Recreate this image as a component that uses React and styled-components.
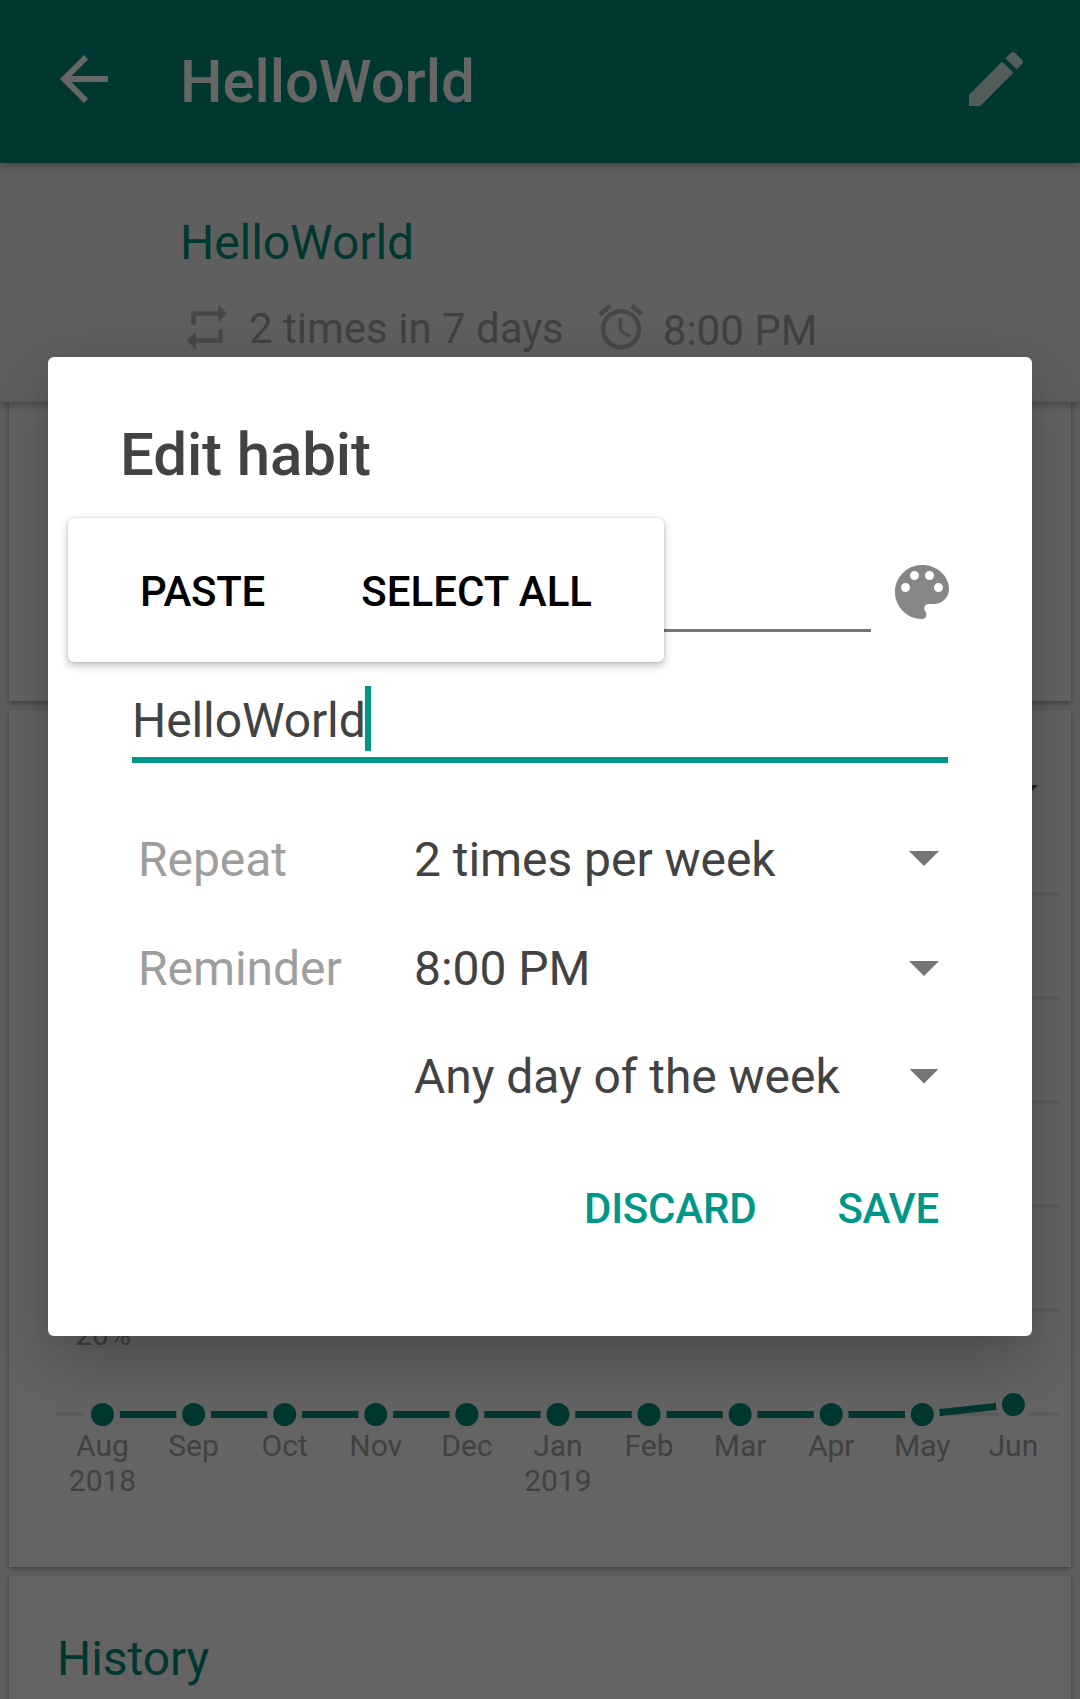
import React from "react";
import styled, { createGlobalStyle } from "styled-components";

const TEAL_DARK = "#00897b";
const TEAL = "#009688";

const GlobalStyle = createGlobalStyle`
  * { box-sizing: border-box; }
  body { margin: 0; font-family: Roboto, "Noto Sans", sans-serif; }
  button { font: inherit; border: 0; background: none; padding: 0; margin: 0; }
  svg { display: block; flex: none; }
`;

const Screen = styled.div`
  position: relative;
  width: 1080px;
  height: 1699px;
  overflow: hidden;
  display: flex;
  flex-direction: column;
  background: #eeeeee;
`;

const Toolbar = styled.header`
  position: relative;
  z-index: 2;
  flex: none;
  height: 163px;
  display: flex;
  align-items: center;
  padding: 0 48px 5px;
  background: ${TEAL_DARK};
  color: #fff;
  box-shadow: 0 3px 8px rgba(0, 0, 0, 0.3);
`;

const ToolbarTitle = styled.h1`
  flex: 1;
  margin: 5px 0 0 60px;
  font-size: 60px;
  line-height: 70px;
  font-weight: 500;
  letter-spacing: -0.1px;
`;

const Icon = styled.svg.attrs({ viewBox: "0 0 24 24" })`
  width: ${(p) => p.$size}px;
  height: ${(p) => p.$size}px;
  fill: ${(p) => p.$color || "currentColor"};
  opacity: ${(p) => p.$opacity || 1};
`;

const Summary = styled.section`
  position: relative;
  z-index: 1;
  flex: none;
  height: 239px;
  padding: 52px 0 0 180px;
  background: #eeeeee;
  box-shadow: 0 3px 8px rgba(0, 0, 0, 0.3);
`;

const SectionTitle = styled.h2`
  margin: 0;
  font-size: 48px;
  line-height: 56px;
  font-weight: 400;
  letter-spacing: -0.06px;
  color: ${TEAL_DARK};
`;

const Facts = styled.div`
  display: flex;
  align-items: flex-start;
  margin-top: 29px;
  color: #a3a3a3;
`;

const Fact = styled.span`
  margin: ${(p) => p.$top}px ${(p) => p.$after || 0}px 0 ${(p) => p.$before}px;
  font-size: 42px;
  line-height: 50px;
  white-space: nowrap;
`;

const CardList = styled.main`
  display: flex;
  flex-direction: column;
  gap: 9px;
  padding: 0 9px;
`;

const Card = styled.section`
  flex: none;
  height: ${(p) => p.$height}px;
  background: #fafafa;
  box-shadow: 0 2px 5px rgba(0, 0, 0, 0.35);
`;

const ScoreCard = styled(Card)`
  display: flex;
  flex-direction: column;
  gap: 14px;
  padding-top: 75px;
`;

const Interval = styled.div`
  display: flex;
  justify-content: flex-end;
  padding-right: 33px;
  height: 15px;
`;

const HistoryCard = styled(Card)`
  padding: 55px 48px 0;
`;

const Triangle = styled.i`
  width: 30px;
  height: 15px;
  margin-bottom: ${(p) => p.$lift || 0}px;
  background: ${(p) => p.$color};
  clip-path: polygon(0 0, 100% 0, 50% 100%);
`;

const Scrim = styled.div`
  position: absolute;
  inset: 0;
  z-index: 3;
  padding: 357px 48px 0;
  background: rgba(0, 0, 0, 0.6);
`;

const Dialog = styled.form`
  position: relative;
  height: 979px;
  padding-top: 63px;
  border-radius: 6px;
  background: #fff;
  color: #424242;
  box-shadow: 0 26px 64px rgba(0, 0, 0, 0.24), 0 0 20px rgba(0, 0, 0, 0.04);
`;

const DialogTitle = styled.h2`
  margin: 0 72px;
  font-size: 60px;
  line-height: 70px;
  font-weight: 500;
  letter-spacing: -0.12px;
`;

const NameRow = styled.div`
  display: flex;
  align-items: center;
  gap: 15px;
  height: 80px;
  margin: 62px 0 0 84px;
  color: #868686;
`;

const NameField = styled.div`
  width: 739px;
  height: 80px;
  border-bottom: 3px solid #757575;
`;

const QuestionField = styled.div`
  display: flex;
  align-items: flex-start;
  height: 77px;
  margin: 54px 84px 0;
  border-bottom: 6px solid ${TEAL};
  font-size: 48px;
  line-height: 69px;
  letter-spacing: -0.1px;
`;

const TextCursor = styled.i`
  width: 6px;
  height: 65px;
  margin-left: -1px;
  background: ${TEAL};
`;

const Options = styled.div`
  display: flex;
  flex-direction: column;
  margin-top: 42px;
`;

const OptionRow = styled.div`
  display: grid;
  grid-template-columns: 276px 1fr 30px;
  align-items: center;
  height: ${(p) => p.$height}px;
  padding: 0 93px 0 90px;
  font-size: 48px;
  line-height: 56px;
  letter-spacing: -0.05px;
`;

const OptionLabel = styled.span`
  color: #9e9e9e;
`;

const Actions = styled.div`
  display: flex;
  justify-content: flex-end;
  gap: 81px;
  margin-top: 53px;
  padding-right: 93px;
`;

const ActionButton = styled.button`
  && {
    font-size: 42px;
    line-height: 50px;
    font-weight: 500;
    letter-spacing: -0.2px;
    color: ${TEAL};
  }
`;

const ContextMenu = styled.div`
  position: absolute;
  left: 20px;
  top: 161px;
  width: 596px;
  height: 144px;
  display: flex;
  align-items: center;
  justify-content: space-between;
  padding: 4px 72px 0;
  border-radius: 6px;
  background: #fff;
  box-shadow: 0 4px 8px rgba(0, 0, 0, 0.24), 0 0 3px rgba(0, 0, 0, 0.16);
`;

const ContextItem = styled.button`
  && {
    font-size: 42px;
    line-height: 50px;
    font-weight: 500;
    letter-spacing: ${(p) => p.$tracking || 0}px;
    color: #000;
  }
`;

const ChartText = styled.text`
  font-size: 30px;
  fill: #a3a3a3;
  text-anchor: middle;
`;

const months = [
  { label: "Aug", year: "2018", score: 0 },
  { label: "Sep", score: 0 },
  { label: "Oct", score: 0 },
  { label: "Nov", score: 0 },
  { label: "Dec", score: 0 },
  { label: "Jan", year: "2019", score: 0 },
  { label: "Feb", score: 0 },
  { label: "Mar", score: 0 },
  { label: "Apr", score: 0 },
  { label: "May", score: 0 },
  { label: "Jun", score: 1.92 },
];

const CHART_TOP = 80;
const CHART_STEP = 104;
const CHART_BASE = CHART_TOP + CHART_STEP * 5;

function ScoreChart() {
  const points = months.map((m, i) => ({
    ...m,
    x: 93.5 + i * 91.09,
    y: CHART_BASE + 0.5 - m.score * (CHART_STEP / 20),
  }));
  return (
    <svg width="1062" height="740" viewBox="0 0 1062 740">
      {[0, 1, 2, 3, 4, 5].map((i) => (
        <rect key={i} x="48" y={CHART_TOP + i * CHART_STEP - 1.5} width="1002" height="3.2" fill="#e4e4e4" />
      ))}
      {[100, 80, 60, 40, 20].map((v, i) => (
        <ChartText key={v} x="94" y={CHART_TOP + i * CHART_STEP + 35}>{v}%</ChartText>
      ))}
      <polyline
        points={points.map((p) => `${p.x},${p.y}`).join(" ")}
        fill="none"
        stroke={TEAL_DARK}
        strokeWidth="7"
      />
      {points.map((p) => (
        <g key={p.label}>
          <circle cx={p.x} cy={p.y} r="17.5" fill="#fafafa" />
          <circle cx={p.x} cy={p.y} r="11.5" fill={TEAL_DARK} />
          <ChartText x={p.x} y={CHART_BASE + 42}>{p.label}</ChartText>
          {p.year && <ChartText x={p.x} y={CHART_BASE + 76.7}>{p.year}</ChartText>}
        </g>
      ))}
    </svg>
  );
}

const options = [
  { label: "Repeat", value: "2 times per week", height: 109, lift: 2 },
  { label: "Reminder", value: "8:00 PM", height: 109, lift: 0 },
  { label: "", value: "Any day of the week", height: 108, lift: 2 },
];

export default function App() {
  return (
    <>
      <GlobalStyle />
      <Screen>
        <Toolbar>
          <Icon $size={72}>
            <path d="M20 11H7.83l5.59-5.59L12 4l-8 8 8 8 1.41-1.41L7.83 13H20v-2z" />
          </Icon>
          <ToolbarTitle>HelloWorld</ToolbarTitle>
          <Icon $size={72} $opacity={0.8}>
            <path d="M3 17.25V21h3.75L17.81 9.94l-3.75-3.75L3 17.25zM20.71 7.04c.39-.39.39-1.02 0-1.41l-2.34-2.34c-.39-.39-1.02-.39-1.41 0l-1.83 1.83 3.75 3.75 1.83-1.83z" />
          </Icon>
        </Toolbar>

        <Summary>
          <SectionTitle>HelloWorld</SectionTitle>
          <Facts>
            <Icon $size={54} $color="#b2b2b2">
              <path d="M7 7h10v3l4-4-4-4v3H5v6h2V7zm10 10H7v-3l-4 4 4 4v-3h12v-6h-2v4z" />
            </Icon>
            <Fact $top={4} $before={15} $after={30}>2 times in 7 days</Fact>
            <Icon $size={54} $color="#b2b2b2">
              <path d="M22 5.72l-4.6-3.86-1.29 1.53 4.6 3.86L22 5.72zM7.88 3.39L6.6 1.86 2 5.71l1.29 1.53 4.59-3.85zM12.5 8H11v6l4.75 2.85.75-1.23-4-2.37V8zM12 4c-4.97 0-9 4.03-9 9s4.02 9 9 9c4.97 0 9-4.03 9-9s-4.03-9-9-9zm0 16c-3.87 0-7-3.13-7-7s3.13-7 7-7 7 3.13 7 7-3.13 7-7 7z" />
            </Icon>
            <Fact $top={6} $before={15}>8:00 PM</Fact>
          </Facts>
        </Summary>

        <CardList>
          <Card $height={299} />
          <ScoreCard $height={857}>
            <Interval>
              <Triangle $color="#606060" />
            </Interval>
            <ScoreChart />
          </ScoreCard>
          <HistoryCard $height={300}>
            <SectionTitle>History</SectionTitle>
          </HistoryCard>
        </CardList>

        <Scrim>
          <Dialog>
            <DialogTitle>Edit habit</DialogTitle>
            <NameRow>
              <NameField />
              <Icon $size={72}>
                <path d="M12 3c-4.97 0-9 4.03-9 9s4.03 9 9 9c.83 0 1.5-.67 1.5-1.5 0-.39-.15-.74-.39-1.01-.23-.26-.38-.61-.38-.99 0-.83.67-1.5 1.5-1.5H16c2.76 0 5-2.24 5-5 0-4.42-4.03-8-9-8zm-5.5 9c-.83 0-1.5-.67-1.5-1.5S5.67 9 6.5 9 8 9.67 8 10.5 7.33 12 6.5 12zm3-4C8.67 8 8 7.33 8 6.5S8.67 5 9.5 5s1.5.67 1.5 1.5S10.33 8 9.5 8zm5 0c-.83 0-1.5-.67-1.5-1.5S13.67 5 14.5 5s1.5.67 1.5 1.5S15.33 8 14.5 8zm3 4c-.83 0-1.5-.67-1.5-1.5S16.67 9 17.5 9s1.5.67 1.5 1.5-.67 1.5-1.5 1.5z" />
              </Icon>
            </NameRow>
            <QuestionField>
              <span>HelloWorld</span>
              <TextCursor />
            </QuestionField>
            <Options>
              {options.map((o) => (
                <OptionRow key={o.value} $height={o.height}>
                  <OptionLabel>{o.label}</OptionLabel>
                  <span>{o.value}</span>
                  <Triangle $color="#757575" $lift={o.lift} />
                </OptionRow>
              ))}
            </Options>
            <Actions>
              <ActionButton type="button">DISCARD</ActionButton>
              <ActionButton type="button">SAVE</ActionButton>
            </Actions>
            <ContextMenu>
              <ContextItem type="button" $tracking={-0.25}>PASTE</ContextItem>
              <ContextItem type="button">SELECT ALL</ContextItem>
            </ContextMenu>
          </Dialog>
        </Scrim>
      </Screen>
    </>
  );
}
